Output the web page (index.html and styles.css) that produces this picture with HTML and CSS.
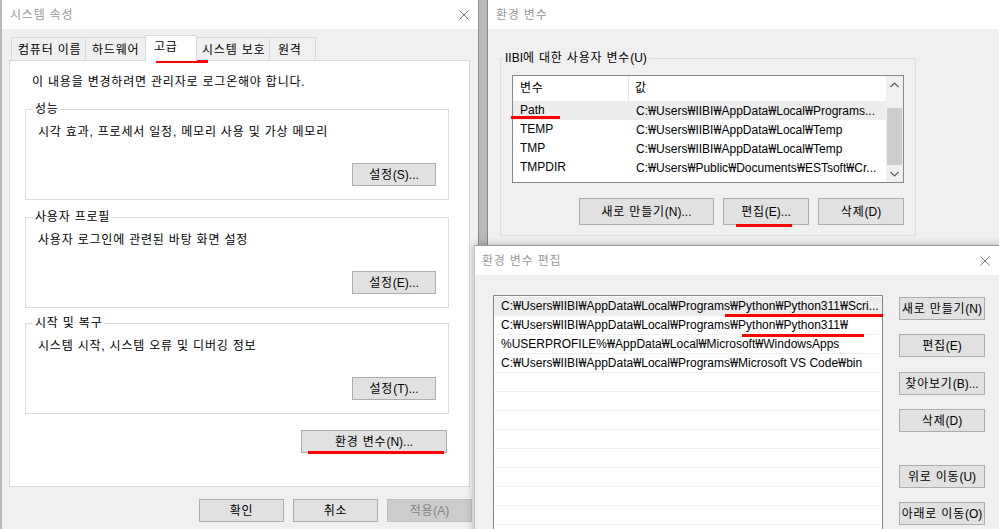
FILE: index.html
```html
<!DOCTYPE html>
<html lang="ko">
<head>
<meta charset="utf-8">
<title>환경 변수</title>
<link rel="stylesheet" href="styles.css">
</head>
<body>
<section class="win win1">
  <header class="tbar">
    <span class="ttl">시스템 속성</span>
    <svg class="x" width="10" height="10" viewBox="0 0 10 10"><path d="M0.5 0.5L9.5 9.5M9.5 0.5L0.5 9.5"/></svg>
  </header>
  <div class="tabs">
    <span class="tab t1">컴퓨터 이름</span>
    <span class="tab t2">하드웨어</span>
    <span class="tab t3 on">고급</span>
    <span class="tab t4">시스템 보호</span>
    <span class="tab t5">원격</span>
  </div>
  <div class="panel">
    <p class="note">이 내용을 변경하려면 관리자로 로그온해야 합니다.</p>
    <fieldset class="grp">
      <legend>성능</legend>
      <p class="desc">시각 효과, 프로세서 일정, 메모리 사용 및 가상 메모리</p>
      <div class="grp-act"><button class="btn">설정<span class="l">(S)...</span></button></div>
    </fieldset>
    <fieldset class="grp g2">
      <legend>사용자 프로필</legend>
      <p class="desc">사용자 로그인에 관련된 바탕 화면 설정</p>
      <div class="grp-act"><button class="btn">설정<span class="l">(E)...</span></button></div>
    </fieldset>
    <fieldset class="grp g3">
      <legend>시작 및 복구</legend>
      <p class="desc">시스템 시작, 시스템 오류 및 디버깅 정보</p>
      <div class="grp-act"><button class="btn">설정<span class="l">(T)...</span></button></div>
    </fieldset>
    <div class="env-act"><button class="btn btn-env">환경 변수<span class="l">(N)...</span></button></div>
  </div>
  <div class="foot">
    <button class="btn">확인</button>
    <button class="btn">취소</button>
    <button class="btn" disabled>적용<span class="l">(A)</span></button>
  </div>
</section>

<section class="win win2">
  <header class="tbar">
    <span class="ttl">환경 변수</span>
  </header>
  <div class="w2body">
    <fieldset class="ugrp">
      <legend><span class="l">IIBI</span>에 대한 사용자 변수<span class="l">(U)</span></legend>
      <div class="lv">
        <div class="lv-main">
          <div class="lvh"><span class="c1">변수</span><span class="c2">값</span></div>
          <div class="lvr sel"><span class="c1">Path</span><span class="c2">C:<span class="w">₩</span>Users<span class="w">₩</span>IIBI<span class="w">₩</span>AppData<span class="w">₩</span>Local<span class="w">₩</span>Programs...</span></div>
          <div class="lvr"><span class="c1">TEMP</span><span class="c2">C:<span class="w">₩</span>Users<span class="w">₩</span>IIBI<span class="w">₩</span>AppData<span class="w">₩</span>Local<span class="w">₩</span>Temp</span></div>
          <div class="lvr"><span class="c1">TMP</span><span class="c2">C:<span class="w">₩</span>Users<span class="w">₩</span>IIBI<span class="w">₩</span>AppData<span class="w">₩</span>Local<span class="w">₩</span>Temp</span></div>
          <div class="lvr"><span class="c1">TMPDIR</span><span class="c2">C:<span class="w">₩</span>Users<span class="w">₩</span>Public<span class="w">₩</span>Documents<span class="w">₩</span>ESTsoft<span class="w">₩</span>Cr...</span></div>
        </div>
        <div class="sb">
          <div class="arr"><svg width="9" height="6" viewBox="0 0 9 6"><path d="M0.5 5L4.5 1L8.5 5"/></svg></div>
          <div class="track"><div class="thumb"></div></div>
          <div class="arr"><svg width="9" height="6" viewBox="0 0 9 6"><path d="M0.5 1L4.5 5L8.5 1"/></svg></div>
        </div>
      </div>
      <div class="w2btns">
        <button class="btn btn2 wide">새로 만들기<span class="l">(N)...</span></button>
        <button class="btn btn2">편집<span class="l">(E)...</span></button>
        <button class="btn btn2">삭제<span class="l">(D)</span></button>
      </div>
    </fieldset>
  </div>
</section>

<section class="win win3">
  <header class="tbar tbar3">
    <span class="ttl">환경 변수 편집</span>
    <svg class="x" width="10" height="10" viewBox="0 0 10 10"><path d="M0.5 0.5L9.5 9.5M9.5 0.5L0.5 9.5"/></svg>
  </header>
  <div class="w3body">
    <div class="lb">
      <div class="lbr sel">C:<span class="w">₩</span>Users<span class="w">₩</span>IIBI<span class="w">₩</span>AppData<span class="w">₩</span>Local<span class="w">₩</span>Programs<span class="w">₩</span>Python<span class="w">₩</span>Python311<span class="w">₩</span>Scri...</div>
      <div class="lbr">C:<span class="w">₩</span>Users<span class="w">₩</span>IIBI<span class="w">₩</span>AppData<span class="w">₩</span>Local<span class="w">₩</span>Programs<span class="w">₩</span>Python<span class="w">₩</span>Python311<span class="w">₩</span></div>
      <div class="lbr">%USERPROFILE%<span class="w">₩</span>AppData<span class="w">₩</span>Local<span class="w">₩</span>Microsoft<span class="w">₩</span>WindowsApps</div>
      <div class="lbr">C:<span class="w">₩</span>Users<span class="w">₩</span>IIBI<span class="w">₩</span>AppData<span class="w">₩</span>Local<span class="w">₩</span>Programs<span class="w">₩</span>Microsoft VS Code<span class="w">₩</span>bin</div>
      <div class="lbr"></div>
      <div class="lbr"></div>
      <div class="lbr"></div>
      <div class="lbr"></div>
      <div class="lbr"></div>
      <div class="lbr"></div>
      <div class="lbr"></div>
      <div class="lbr"></div>
      <div class="lbr"></div>
    </div>
    <div class="w3btns">
      <button class="btn">새로 만들기<span class="l">(N)</span></button>
      <button class="btn">편집<span class="l">(E)</span></button>
      <button class="btn gap15">찾아보기<span class="l">(B)...</span></button>
      <button class="btn">삭제<span class="l">(D)</span></button>
      <button class="btn gapbig">위로 이동<span class="l">(U)</span></button>
      <button class="btn">아래로 이동<span class="l">(O)</span></button>
    </div>
  </div>
</section>

<div class="mk mk1"></div>
<div class="mk mk2"></div>
<div class="mk mk3"></div>
<div class="mk mk4"></div>
<div class="mk mk5"></div>
<div class="mk mk6"></div>
</body>
</html>
```

FILE: styles.css
```css
* { box-sizing: border-box; }
html, body { margin: 0; padding: 0; }
body {
  width: 999px;
  height: 529px;
  overflow: hidden;
  position: relative;
  background: #b9b9b9;
  font-family: "Liberation Sans", "Noto Sans CJK KR", sans-serif;
  font-size: 12px;
  line-height: 16px;
  letter-spacing: 0.8px;
  color: #000;
}
p { margin: 0; }
.l { letter-spacing: 0; }
.w { font-family: "Noto Sans", "DejaVu Sans", sans-serif; letter-spacing: 0; }

.win {
  position: absolute;
  background: #f0f0f0;
  overflow: hidden;
}
.win1 { left: 2px; top: 0; width: 477px; height: 540px; border-right: 1px solid #8a8a8a; }
.win2 { left: 487px; top: 0; width: 520px; height: 246px; border-left: 1px solid #8a8a8a; }
.win3 {
  left: 474px; top: 245px; width: 530px; height: 300px;
  border-top: 1px solid #9a9a9a;
  border-left: 1px solid #c4c4c4;
  box-shadow: 0 0 8px rgba(0, 0, 0, 0.28);
}

.tbar {
  height: 29px;
  background: #fff;
  display: flex;
  align-items: center;
  justify-content: space-between;
  padding: 0 9px 0 8px;
  color: #999;
}
.tbar3 { padding: 0 14px 0 7px; }
.x { stroke: #7a7a7a; stroke-width: 1; fill: none; }

.btn {
  height: 23px;
  width: 84px;
  padding: 0;
  margin: 0;
  background: #e1e1e1;
  border: 1px solid #adadad;
  font: inherit;
  letter-spacing: inherit;
  color: #000;
  text-align: center;
  white-space: nowrap;
}
.btn:disabled { background: #cccccc; border-color: #bfbfbf; color: #838383; }

/* window 1 */
.tabs {
  display: flex;
  align-items: flex-start;
  margin: 6px 0 -1px 9px;
  height: 26px;
  position: relative;
  z-index: 1;
}
.tab {
  height: 23px;
  margin-top: 2px;
  padding: 4px 0 0 6px;
  background: #f0f0f0;
  border: 1px solid #d9d9d9;
  border-left: none;
  border-bottom: none;
  white-space: nowrap;
}
.t1 { width: 75px; border-left: 1px solid #d9d9d9; }
.t2 { width: 60px; }
.t3 { width: 51px; }
.t4 { width: 73px; padding-left: 5px; }
.t5 { width: 46px; padding-left: 8px; }
.tab.on {
  height: 26px;
  margin-top: 0;
  margin-left: -1px;
  padding: 3px 0 0 8px;
  background: #fff;
  border-left: 1px solid #d9d9d9;
  width: 52px;
}

.panel {
  position: relative;
  margin-left: 7px;
  width: 461px;
  height: 427px;
  background: #fff;
  border: 1px solid #d9d9d9;
  padding: 13px 20px 0 15px;
}
.note { margin-left: 7px; }
.grp {
  min-width: 0;
  margin: 11px 0 0;
  border: 1px solid #dcdcdc;
  padding: 0 12px 13px 12px;
}
.grp.g2 { margin-top: 9px; }
.grp.g3 { margin-top: 7px; }
.grp legend { padding: 0 2px; margin-left: -5px; }
.desc { margin-top: 7px; }
.grp-act { display: flex; justify-content: flex-end; margin-top: 23px; }
.env-act { display: flex; justify-content: flex-end; margin-top: 16px; padding-right: 2px; }
.btn-env { width: 146px; }
.foot {
  display: flex;
  justify-content: flex-end;
  gap: 9px;
  margin-top: 12px;
  padding-right: 6px;
}
.foot .btn { width: 85px; }

/* window 2 */
.w2body { padding: 21px 0 0 12px; }
.ugrp {
  width: 416px;
  min-width: 0;
  margin: 0;
  border: 1px solid #dcdcdc;
  padding: 0 11px 10px 11px;
}
.ugrp legend { padding: 0 2px; margin-left: -9px; }
.lv {
  margin-top: 9px;
  height: 108px;
  border: 1px solid #828790;
  background: #fff;
  display: flex;
}
.lv-main { flex: 1; min-width: 0; overflow: hidden; }
.lvh { display: flex; height: 25px; line-height: 25px; }
.lvr { display: flex; height: 19px; line-height: 19px; letter-spacing: 0; }
.lvr.sel { background: #ededed; }
.c1 { flex: none; width: 116px; padding-left: 7px; border-right: 1px solid transparent; white-space: nowrap; }
.lvh .c1 { border-right-color: #e5e5e5; }
.c2 { padding-left: 6px; white-space: nowrap; }
.lvr .c2 { padding-left: 7px; }
.sb {
  flex: none;
  width: 17px;
  background: #f0f0f0;
  display: flex;
  flex-direction: column;
}
.arr {
  height: 17px;
  display: flex;
  align-items: center;
  justify-content: center;
}
.arr svg { stroke: #606060; stroke-width: 1.2; fill: none; }
.track { flex: 1; display: flex; flex-direction: column; justify-content: flex-end; }
.thumb { height: 57px; margin: 0 1px; background: #cdcdcd; }
.w2btns {
  display: flex;
  justify-content: flex-end;
  gap: 9px;
  margin-top: 15px;
}
.btn2 { height: 27px; width: 86px; }
.btn2.wide { width: 135px; }

/* window 3 */
.w3body { display: flex; gap: 16px; padding: 20px 0 0 18px; }
.lb {
  flex: none;
  width: 390px;
  height: 260px;
  border: 1px solid #828790;
  background: #fff;
  padding-top: 1px;
  overflow: hidden;
}
.lbr {
  height: 19px;
  line-height: 18px;
  padding-left: 7px;
  border-bottom: 1px solid #f0f0f0;
  white-space: nowrap;
  letter-spacing: 0;
}
.lbr.sel { background: #ededed; }
.w3btns { display: flex; flex-direction: column; gap: 14px; padding-top: 2px; }
.w3btns .btn { width: 86px; }
.w3btns .gap15 { margin-top: 1px; }
.w3btns .gapbig { margin-top: 19px; }

/* red annotation marks */
.mk { position: absolute; height: 3px; background: #ff0000; }
.mk1 { left: 156px; top: 60px; width: 52px; }
.mk2 { left: 308px; top: 451px; width: 136px; }
.mk3 { left: 511px; top: 116px; width: 49px; }
.mk4 { left: 736px; top: 224px; width: 56px; }
.mk5 { left: 725px; top: 314px; width: 158px; }
.mk6 { left: 742px; top: 334px; width: 122px; }
```
